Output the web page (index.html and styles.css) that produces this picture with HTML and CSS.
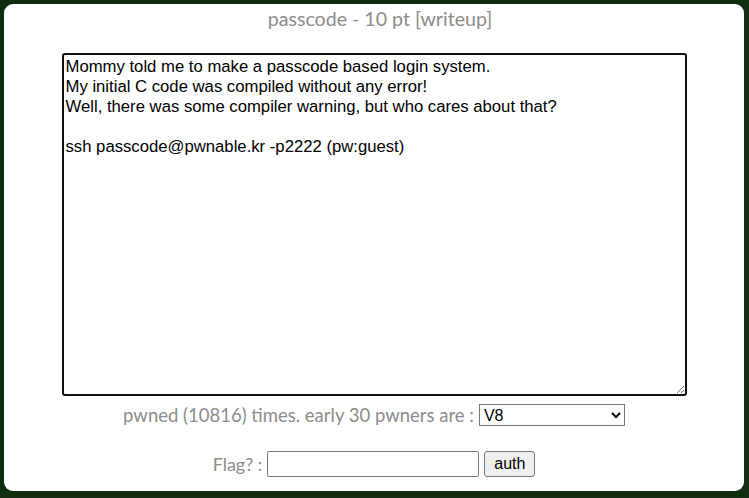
FILE: index.html
```html
<!DOCTYPE html>
<html>
<head>
<meta charset="utf-8">
<link rel="stylesheet" href="styles.css">
</head>
<body>
<div class="box">
  <div class="title">passcode - 10 pt [writeup]</div>
  <textarea class="desc">Mommy told me to make a passcode based login system.
My initial C code was compiled without any error!
Well, there was some compiler warning, but who cares about that?

ssh passcode@pwnable.kr -p2222 (pw:guest)</textarea>
  <div class="row pwned">
    <span class="label">pwned (10816) times. early 30 pwners are :</span>
    <select class="pwners"><option>V8</option></select>
  </div>
  <div class="row flag">
    <span class="label">Flag? :</span>
    <input class="flag-input" type="text">
    <button class="auth">auth</button>
  </div>
</div>
</body>
</html>
```
FILE: styles.css
```css
html, body {
  margin: 0;
  padding: 0;
  height: 100%;
}
body {
  background: #0f2e10;
  padding: 4px 5px 6px 4px;
  box-sizing: border-box;
  overflow: hidden;
}
.box {
  background: #fff;
  border-radius: 9px;
  height: 487px;
  display: flex;
  flex-direction: column;
  align-items: center;
  font-family: Lato, "Open Sans", sans-serif;
  color: #8c8c8c;
}
.title {
  font-size: 19.6px;
  line-height: 24px;
  margin-top: 3px;
  height: 46px;
  padding-left: 12px;
}
.desc {
  width: 625px;
  height: 343px;
  box-sizing: border-box;
  border: 2px solid #111;
  border-radius: 3px;
  padding: 2px 2px;
  font-family: "Liberation Sans", Arial, sans-serif;
  font-size: 16.7px;
  line-height: 20px;
  color: #000;
  resize: both;
  margin: 0;
}
.row {
  display: flex;
  align-items: center;
  gap: 5px;
}
.pwned {
  margin-top: 8px;
}
.label {
  font-size: 18px;
}
.pwned .label {
  font-size: 18.5px;
}
.pwners {
  width: 146px;
  height: 22px;
  font-family: "Liberation Sans", Arial, sans-serif;
  font-size: 16px;
  border: 1px solid #767676;
  border-radius: 0;
  background: #fff;
  color: #000;
}
.flag {
  margin-top: 25px;
}
.flag-input {
  width: 212px;
  height: 26px;
  box-sizing: border-box;
  border: 1px solid #767676;
  border-radius: 2px;
  margin: 0;
}
.auth {
  height: 26px;
  width: 51px;
  font-family: "Liberation Sans", Arial, sans-serif;
  font-size: 16px;
  background: #efefef;
  border: 1px solid #767676;
  border-radius: 3px;
  color: #000;
  padding: 0;
}
```
